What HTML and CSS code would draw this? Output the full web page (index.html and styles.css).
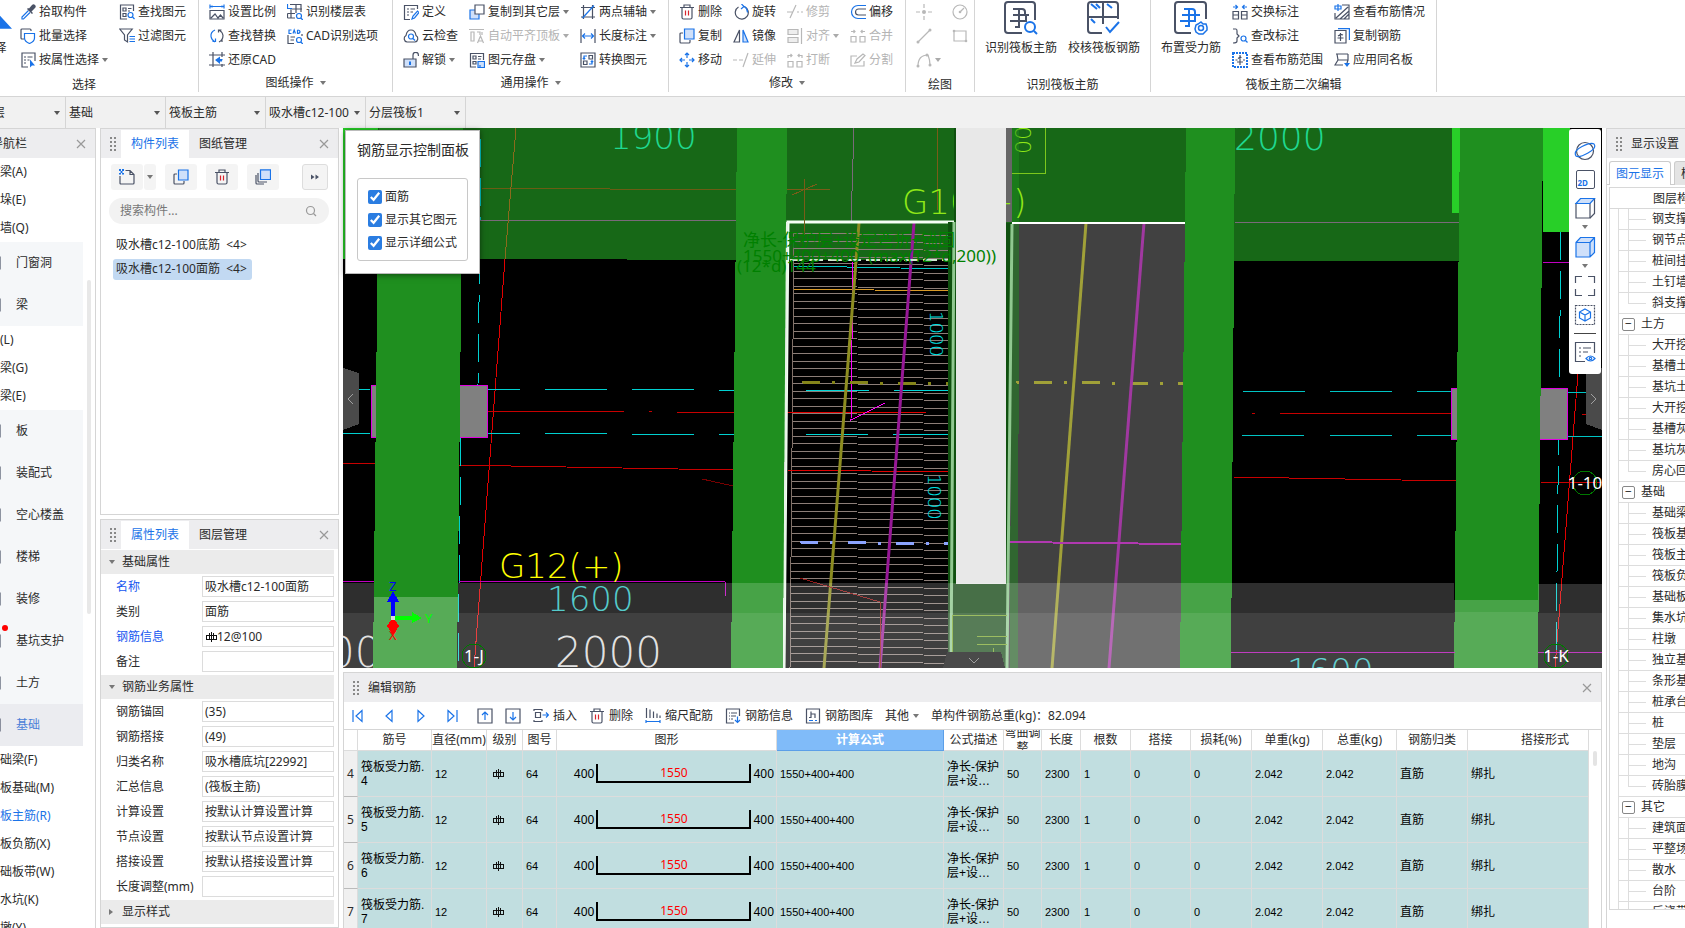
FILE: index.html
```html
<!DOCTYPE html>
<html lang="zh-CN">
<head>
    <meta charset="UTF-8">
    <meta name="viewport" content="width=device-width, initial-scale=1.0">
    <title>筏板主筋 - 编辑钢筋</title>
    <link rel="stylesheet" href="styles.css">
</head>
<body>
    <!-- icon set -->
    <svg class="defs" width="0" height="0">
        <symbol id="pick" viewBox="0 0 16 16"><path class="b" d="M8.500 6.500L2 13v2h1.500L10 8.500"/><path class="ink" d="M7 5l5 5 1-1-1.500-1.500L15 4a1.800 1.800 0 0 0-3-3L9 4.500 8 4z"/></symbol>
        <symbol id="batch" viewBox="0 0 16 16"><path d="M4 11H2a1 1 0 0 1-1-1V2a1 1 0 0 1 1-1h8a1 1 0 0 1 1 1v1"/><path class="b" d="M4.500 5.500h10V10q0 3.500-5 5.500-5-2-5-5.500z"/></symbol>
        <symbol id="byprop" viewBox="0 0 16 16"><path d="M8 15H2V1h13v8M4 5h2M7.500 5h5M4 8h2M7.500 8h2M4 11h2"/><path class="fb" d="M10 7.500v8l2-2h3z"/></symbol>
        <symbol id="find" viewBox="0 0 16 16"><path d="M8 15H1.500V1h13v6M4 4h3v3H4zM4 9.500h3v3H4zM9 4.500h3.500M9 7h2"/><circle class="b" cx="11.500" cy="11" r="2.500"/><path class="b" d="M13.500 13l2 2"/></symbol>
        <symbol id="filter" viewBox="0 0 16 16"><path d="M.800 1h12.400L8.500 7v7L5.500 12V7z"/><path class="b" d="M10.500 8.500H16M10.500 11H16M10.500 13.500H16"/></symbol>
        <symbol id="scale" viewBox="0 0 16 16"><path class="b" d="M1 2.500h14M1 .500v4M15 .500v4M3 1.500v2M13 1.500v2"/><path d="M1 6.500h14V15H1zM2 14l4-4 3 4 2.500-3L14 14"/></symbol>
        <symbol id="swap" viewBox="0 0 16 16"><path class="b" d="M6 2Q1.500 4 2 8.500 2.500 12 6 14M3.500 13.500H6.500V10.500"/><path d="M10 14q4-2 4-6.500Q13.500 4 10 2M13 14v-2.500M9.500 4.500V2h3"/></symbol>
        <symbol id="crop" viewBox="0 0 16 16"><path d="M4 0v15M0 3h16M0 13h16M13 0v5M13 12v3"/><path class="fb" d="M6 8l5-3.500V7h3q-1 0-1 2.500H11V12z"/></symbol>
        <symbol id="floors" viewBox="0 0 16 16"><path d="M3 .500h11V8M9 .500V9M3 5h12M.500 9.500H8M4 6v8M.500 14H8M.500 9.500V14"/><path class="b" d="M.500 0v4.500H5"/><circle class="b" cx="12" cy="12" r="2.500"/><path class="b" d="M13.800 14l2 2"/></symbol>
        <symbol id="cad" viewBox="0 0 16 16"><path d="M7 15.500H1V7M15 6v2M3.500 9H8M3.500 12H7"/><path class="b" d="M4.500 2H2v3.500h2.500M6 5.500l1.200-3.500 1.200 3.500M10.500 2v3.500q2.500 0 2.500-1.700T10.500 2"/><circle class="b" cx="12" cy="12" r="2.500"/><path class="b" d="M13.800 14l2 2"/></symbol>
        <symbol id="define" viewBox="0 0 16 16"><path d="M7 15.500H1.500v-14h13V5M4 5h2M7.500 5H12M4 8h2M7.500 8H10M4 11h2"/><path class="b" d="M9 15l1-3 4.500-5 1.500 1.500L11.500 14z"/></symbol>
        <symbol id="cloud" viewBox="0 0 16 16"><path d="M4 14a3.500 3.500 0 0 1-1-6.500Q4 2 8 2t5 5.500A3.500 3.500 0 0 1 12 14z"/><circle class="b" cx="8" cy="8.500" r="2.500"/><path class="b" d="M10 10.500l2 2"/></symbol>
        <symbol id="unlock" viewBox="0 0 16 16"><path class="tint" d="M1 7h12v8H1z"/><path d="M10 7V3a2.700 2.700 0 0 1 5.400 0v1"/><path class="b bold" d="M7 9.500v3.500"/></symbol>
        <symbol id="copyto" viewBox="0 0 16 16"><path class="b tintb" d="M1 6h9v9H1z"/><path class="solid" d="M6 1h9v9H6z"/></symbol>
        <symbol id="aligntop" viewBox="0 0 16 16"><path d="M0 1.500h15M2 4h3v9H2zM8 4h3v3M13 4v3M8.500 15l3-7 3 7M9.500 13h4"/></symbol>
        <symbol id="store" viewBox="0 0 16 16"><path d="M7 15H1.500V1.500h13V8M4 4h3v3H4zM9 4.500h3.500M9 7h3M4 9.500h3v2.500H4z"/><path class="b tintb" d="M9 9.500h6.500v6H9zM11 13v2.500"/></symbol>
        <symbol id="twopt" viewBox="0 0 16 16"><path d="M3.500 1v14M12.500 1v14M1 3.500h14M1 13h14"/><path class="b" d="M2.500 14L14 1.500"/></symbol>
        <symbol id="length" viewBox="0 0 16 16"><path d="M1 1v14M15 1v14"/><path class="b" d="M2.500 8h11M5 5.500L2.500 8 5 10.500M11 5.500L13.500 8 11 10.500"/></symbol>
        <symbol id="convert" viewBox="0 0 16 16"><path d="M1 1h14v14H1zM9 3.500h3.500V7H9zM3.500 9H7v3.500H3.500z"/><path class="b" d="M7 4H4v3M2.800 6L4 7.200 5.200 6M9 12h3V9M10.800 10L12 8.800l1.200 1.200"/></symbol>
        <symbol id="trash" viewBox="0 0 16 16"><path d="M1 3.500h14M5 3.500V1h6v2.500M3 3.500v10Q3 15 4.500 15h7q1.500 0 1.500-1.500v-10"/><path class="red" d="M6.500 6.500v5M9.500 6.500v5"/></symbol>
        <symbol id="copy" viewBox="0 0 16 16"><path d="M4 5H2a1 1 0 0 0-1 1v8a1 1 0 0 0 1 1h8a1 1 0 0 0 1-1v-2"/><path class="b tintb" d="M5.500 1h9.500v10H5.500z"/></symbol>
        <symbol id="move" viewBox="0 0 16 16"><path class="b" d="M8 1v5M8 10v5M1 8h5M10 8h5M6 3l2-2 2 2M6 13l2 2 2-2M3 6L1 8l2 2M13 6l2 2-2 2"/></symbol>
        <symbol id="rotate" viewBox="0 0 16 16"><path d="M5.500 3a6.500 6.500 0 1 0 6-.3"/><path class="b" d="M8.500 0L11 2.500 8 5M11.500 2.500q3 2 3 6"/></symbol>
        <symbol id="mirror" viewBox="0 0 16 16"><path d="M6.500 2v12H1z"/><path class="b tintb" d="M10 2v12h5z"/></symbol>
        <symbol id="extend" viewBox="0 0 16 16"><path d="M0 8h4M6 8h4M10 15L15 1"/></symbol>
        <symbol id="trim" viewBox="0 0 16 16"><path d="M0 8h6M3 14L9 1M10 8h2M14 8h2"/></symbol>
        <symbol id="align" viewBox="0 0 16 16"><path class="grey" d="M1 1.500h10v5H1zM1 9.500h10v5H1z"/><path d="M14.500 0v16"/></symbol>
        <symbol id="break" viewBox="0 0 16 16"><path d="M1 9.500h5V15H1zM10 9.500h5V15h-5zM1 6V3.500h4M3.500 2L5 3.500 3.500 5M15 6V3.500h-4M12.500 2L11 3.500 12.500 5"/></symbol>
        <symbol id="offset" viewBox="0 0 16 16"><path class="b" d="M16 1.500H8a6.500 6.500 0 0 0 0 13h8"/><path d="M16 5H8.500a3 3 0 0 0 0 6H16"/></symbol>
        <symbol id="merge" viewBox="0 0 16 16"><path d="M1 8.500h5V14H1zM10 8.500h5V14h-5zM1 3.500h4M3.500 2L5 3.500 3.500 5M15 3.500h-4M12.500 2L11 3.500 12.500 5"/></symbol>
        <symbol id="split" viewBox="0 0 16 16"><path d="M7 4H1v10h13V9M5 11l2-4 6-5 2 1.500L9 10z"/></symbol>
        <symbol id="point" viewBox="0 0 16 16"><path d="M8 0v4M8 12v4M0 8h4M12 8h4"/><circle class="dot" cx="8" cy="8" r="2"/></symbol>
        <symbol id="circle" viewBox="0 0 16 16"><circle cx="8" cy="8" r="7"/><path d="M8 8l4-4"/><circle class="dot" cx="8" cy="8" r="1.300"/></symbol>
        <symbol id="line" viewBox="0 0 16 16"><path d="M2 14L14 2"/><circle class="dot" cx="2" cy="14" r="1.500"/><circle class="dot" cx="14" cy="2" r="1.500"/></symbol>
        <symbol id="rect" viewBox="0 0 16 16"><path d="M2 3h12v10H2z"/><circle class="dot" cx="2" cy="3" r="1.300"/><circle class="dot" cx="14" cy="13" r="1.300"/></symbol>
        <symbol id="arc" viewBox="0 0 16 16"><path d="M2 14Q2 3 12 3M12 3q2 5 2 10"/><circle class="dot" cx="2" cy="14" r="1.500"/><circle class="dot" cx="11" cy="3" r="1.500"/><circle class="dot" cx="14" cy="13" r="1.500"/></symbol>
        <symbol id="swaptag" viewBox="0 0 16 16"><path d="M1 7.500h5.500V15H1zM9.500 7.500H15V15H9.500zM1 11h5.500M9.500 11H15"/><path class="b" d="M1 3h4M3.500 1L5.500 3 3.500 5M15 3h-4M12.500 1l-2 2 2 2"/></symbol>
        <symbol id="edittag" viewBox="0 0 16 16"><path d="M1 1h3q1 0 1 2v3l2 2-2 2v3q0 2-4 2"/><circle class="b" cx="11.500" cy="10.500" r="2.500"/><path class="b" d="M13.500 12.500l2 2"/></symbol>
        <symbol id="range" viewBox="0 0 16 16"><path class="b bold dash" d="M1 1h14v14H1z"/><path d="M8 3v10M5 10h6M6 6.500q2-1.500 3.500-1M3.500 8h2M11 8h2"/></symbol>
        <symbol id="state" viewBox="0 0 16 16"><path d="M8 1h7v14H1V9M2 14L14 3M6 15l9-8M10 15l5-5"/><path class="b" d="M4 0v7M1 2h6v3H1z"/></symbol>
        <symbol id="copybar" viewBox="0 0 16 16"><path d="M1 2.500h11V15H1zM6.500 5v8M3.500 10h6M4 8q3-2 5-1"/><path class="b" d="M4 .600h11.400V12"/></symbol>
        <symbol id="apply" viewBox="0 0 16 16"><path d="M2 2h12M3 2l1 6h10V2M4 8l-3 5h8M14 8l-1 3"/><path class="fb" d="M10 11h6l-3 4z"/></symbol>
        <symbol id="bigfind" viewBox="0 0 34 34"><path d="M18 32H4a3 3 0 0 1-3-3V4a3 3 0 0 1 3-3h24a3 3 0 0 1 3 3v15M9 8h9q3 0 3 3v3M9 14h16M6 20h16V15M15 9v17h-4"/><circle class="b" cx="26" cy="26" r="5"/><path class="b" d="M30 30l3 3"/></symbol>
        <symbol id="bigcheck" viewBox="0 0 34 34"><path d="M15 32H4a3 3 0 0 1-3-3V4a3 3 0 0 1 3-3h24a3 3 0 0 1 3 3v14M1 16h30M16 1v22"/><path class="b" d="M4 3l6 5M9 3l4 4M20 3l5 4M4 18l4 4M19 26l4 5 9-10"/></symbol>
        <symbol id="bigplace" viewBox="0 0 34 34"><path d="M17 32H4a3 3 0 0 1-3-3V4a3 3 0 0 1 3-3h25a3 3 0 0 1 3 3v14"/><path class="b" d="M10 8h8q3 0 3 3v3M8 14h18M6 20h15V15M15 9v16h-4"/><circle class="b thin" cx="27" cy="27" r="2.500"/><path class="b thin" d="M27 21l2 2h3l1 3v3l-2 2-2 2h-4l-3-2-1-3 1-4 2-1z"/></symbol>
        <symbol id="arrow" viewBox="0 0 16 16"><path class="fb" d="M4 0l12 13H9l-5 3z"/></symbol>
        <symbol id="new" viewBox="0 0 16 16"><path d="M6.500 1.500H11L15 5.500V14q0 1-1 1H2q-1 0-1-1V7M11 1.500v4h4"/><path class="fb" d="M0 0h2v2H0zM3 0h2v2H3zM1.500 2h2v2h-2zM0 4h2v1.500H0zM3 4h2v1.500H3z"/></symbol>
        <symbol id="layers" viewBox="0 0 16 16"><path d="M3 4v8q0 1 1 1h8M1 6v8q0 1 1 1h7"/><path class="b tintb" d="M5.500.800h10V10.500h-10z"/></symbol>
        <symbol id="more" viewBox="0 0 16 16"><path class="ink" d="M4 5.500l3.500 2.500L4 10.500zM8.500 5.500L12 8l-3.500 2.500z"/></symbol>
        <symbol id="search" viewBox="0 0 16 16"><circle cx="7.500" cy="7.500" r="4"/><path d="M10.500 10.500L13 13"/></symbol>
        <symbol id="close" viewBox="0 0 16 16"><path class="x" d="M4 4l8 8M12 4l-8 8"/></symbol>
        <symbol id="grip" viewBox="0 0 8 16"><path class="grip" d="M1 1h2v2H1zM5 1h2v2H5zM1 5h2v2H1zM5 5h2v2H5zM1 9h2v2H1zM5 9h2v2H5zM1 13h2v2H1zM5 13h2v2H5z"/></symbol>
        <symbol id="first" viewBox="0 0 16 16"><path class="b" d="M4 2v12M13 2.500L7 8l6 5.500z"/></symbol>
        <symbol id="prev" viewBox="0 0 16 16"><path class="b" d="M11 2.500L5 8l6 5.500z"/></symbol>
        <symbol id="next" viewBox="0 0 16 16"><path class="b" d="M5 2.500L11 8l-6 5.500z"/></symbol>
        <symbol id="last" viewBox="0 0 16 16"><path class="b" d="M3 2.500L9 8l-6 5.500zM12 2v12"/></symbol>
        <symbol id="up" viewBox="0 0 16 16"><path d="M1 1h14v14H1z"/><path class="b" d="M8 12V4M5 7l3-3 3 3"/></symbol>
        <symbol id="down" viewBox="0 0 16 16"><path d="M1 1h14v14H1z"/><path class="b" d="M8 4v8M5 9l3 3 3-3"/></symbol>
        <symbol id="insert" viewBox="0 0 16 16"><path d="M9 3V1.500H1V3M1 12v1.500h8V12M2.500 4.500h5v5h-5z"/><path class="b" d="M9.500 7h6M13 4.500L15.500 7 13 9.500"/></symbol>
        <symbol id="ruler" viewBox="0 0 16 16"><path d="M1.500 0v10M5 1.500V10M8.500 3.500V10M12 5.500V10M15 7.500V10"/><path class="b" d="M1 13.500h14M1 12v3M15 12v3"/></symbol>
        <symbol id="info" viewBox="0 0 16 16"><path d="M9 15H1.500V1h13v7M4 5h1M6 5h6M4 8h1M6 8h5M4 11h1M6 11h2"/><path class="b" d="M12.500 8.500v6M10 12l2.500 2.500L15 12"/></symbol>
        <symbol id="lib" viewBox="0 0 16 16"><path d="M1.500 1h13v14h-13zM6 3.500v6H4M6 6h4v4"/><path class="b" d="M4 12.500h4M10 12.500h2"/></symbol>
        <symbol id="rebar" viewBox="0 0 12 12"><path class="blk" d="M6 1v10M1 4h10v4H1zM4 2v7M8 2v7"/></symbol>
        <symbol id="orbit" viewBox="0 0 22 22"><circle cx="11" cy="11" r="8.500"/><path class="b" d="M2 16Q-1 11 8 6.500T20 4q3 4-6 9T2 16z"/></symbol>
        <symbol id="box" viewBox="0 0 22 22"><path d="M2 6.500h14V21H2z"/><path d="M16 21l4.500-4.500V2"/><path class="b tintb" d="M2 6.500L6.500 1.500h14L16 6.500z"/></symbol>
        <symbol id="boxfill" viewBox="0 0 22 22"><path class="b tintb" d="M2 6.500L6.500 1.500h14V16.500L16 21H2zM2 6.500h14V21M16 6.500l4.500-5"/></symbol>
        <symbol id="fit" viewBox="0 0 22 22"><path d="M8 1.500H1.500V8M14 1.500h6.500V8M8 20.500H1.500V14M14 20.500h6.500V14"/></symbol>
        <symbol id="iso" viewBox="0 0 22 22"><path class="dash" d="M1.500 1.500h19v19h-19z"/><path class="b" d="M11 5l5.500 3v6L11 17l-5.500-3V8zM5.500 8l5.500 3 5.500-3M11 11v6"/></symbol>
        <symbol id="show" viewBox="0 0 22 22"><path d="M11 20.500H1.500v-19h19V12M5 7h2M9 7h8M5 11h2M9 11h5M5 15h2"/><path class="b" d="M12 17.500q4.500-5 9 0-4.500 5-9 0z"/><circle class="b" cx="16.500" cy="17.500" r="1.200"/></symbol>
        <symbol id="navicon" viewBox="0 0 16 16"><path class="grey" d="M1 2h14v12H1z"/></symbol>
    </svg>

    <div class="app">
        <header class="ribbon">
            <section class="group group-select">
                <div class="tools">
                    <button class="big"><svg class="ico"><use href="#arrow"/></svg>选择</button>
                    <div class="stack">
                        <button><svg class="ico"><use href="#pick"/></svg>拾取构件</button>
                        <button><svg class="ico"><use href="#batch"/></svg>批量选择</button>
                        <button><svg class="ico"><use href="#byprop"/></svg>按属性选择<i class="caret"></i></button>
                    </div>
                    <div class="stack">
                        <button><svg class="ico"><use href="#find"/></svg>查找图元</button>
                        <button><svg class="ico"><use href="#filter"/></svg>过滤图元</button>
                    </div>
                </div>
                <h2 class="plain">选择</h2>
            </section>
            <section class="group group-sheet">
                <div class="tools">
                    <div class="stack">
                        <button><svg class="ico"><use href="#scale"/></svg>设置比例</button>
                        <button><svg class="ico"><use href="#swap"/></svg>查找替换</button>
                        <button><svg class="ico"><use href="#crop"/></svg>还原CAD</button>
                    </div>
                    <div class="stack">
                        <button><svg class="ico"><use href="#floors"/></svg>识别楼层表</button>
                        <button><svg class="ico"><use href="#cad"/></svg>CAD识别选项</button>
                    </div>
                </div>
                <h2>图纸操作<i class="caret"></i></h2>
            </section>
            <section class="group group-common">
                <div class="tools">
                    <div class="stack">
                        <button><svg class="ico"><use href="#define"/></svg>定义</button>
                        <button><svg class="ico"><use href="#cloud"/></svg>云检查</button>
                        <button><svg class="ico"><use href="#unlock"/></svg>解锁<i class="caret"></i></button>
                    </div>
                    <div class="stack">
                        <button><svg class="ico"><use href="#copyto"/></svg>复制到其它层<i class="caret"></i></button>
                        <button class="off" disabled><svg class="ico"><use href="#aligntop"/></svg>自动平齐顶板<i class="caret"></i></button>
                        <button><svg class="ico"><use href="#store"/></svg>图元存盘<i class="caret"></i></button>
                    </div>
                    <div class="stack">
                        <button><svg class="ico"><use href="#twopt"/></svg>两点辅轴<i class="caret"></i></button>
                        <button><svg class="ico"><use href="#length"/></svg>长度标注<i class="caret"></i></button>
                        <button><svg class="ico"><use href="#convert"/></svg>转换图元</button>
                    </div>
                </div>
                <h2>通用操作<i class="caret"></i></h2>
            </section>
            <section class="group group-modify">
                <div class="tools">
                    <div class="stack">
                        <button><svg class="ico"><use href="#trash"/></svg>删除</button>
                        <button><svg class="ico"><use href="#copy"/></svg>复制</button>
                        <button><svg class="ico"><use href="#move"/></svg>移动</button>
                    </div>
                    <div class="stack">
                        <button><svg class="ico"><use href="#rotate"/></svg>旋转</button>
                        <button><svg class="ico"><use href="#mirror"/></svg>镜像</button>
                        <button class="off" disabled><svg class="ico"><use href="#extend"/></svg>延伸</button>
                    </div>
                    <div class="stack">
                        <button class="off" disabled><svg class="ico"><use href="#trim"/></svg>修剪</button>
                        <button class="off" disabled><svg class="ico"><use href="#align"/></svg>对齐<i class="caret"></i></button>
                        <button class="off" disabled><svg class="ico"><use href="#break"/></svg>打断</button>
                    </div>
                    <div class="stack">
                        <button><svg class="ico"><use href="#offset"/></svg>偏移</button>
                        <button class="off" disabled><svg class="ico"><use href="#merge"/></svg>合并</button>
                        <button class="off" disabled><svg class="ico"><use href="#split"/></svg>分割</button>
                    </div>
                </div>
                <h2>修改<i class="caret"></i></h2>
            </section>
            <section class="group group-draw">
                <div class="tools">
                    <div class="stack">
                        <button class="off" aria-label="点" disabled><svg class="ico"><use href="#point"/></svg></button>
                        <button class="off" aria-label="直线" disabled><svg class="ico"><use href="#line"/></svg></button>
                        <button class="off" aria-label="弧" disabled><svg class="ico"><use href="#arc"/></svg><i class="caret"></i></button>
                    </div>
                    <div class="stack">
                        <button class="off" aria-label="圆" disabled><svg class="ico"><use href="#circle"/></svg></button>
                        <button class="off" aria-label="矩形" disabled><svg class="ico"><use href="#rect"/></svg></button>
                    </div>
                </div>
                <h2 class="plain">绘图</h2>
            </section>
            <section class="group group-detect">
                <div class="tools">
                    <button class="big"><svg class="ico"><use href="#bigfind"/></svg>识别筏板主筋</button>
                    <button class="big"><svg class="ico"><use href="#bigcheck"/></svg>校核筏板钢筋</button>
                </div>
                <h2 class="plain">识别筏板主筋</h2>
            </section>
            <section class="group group-edit">
                <div class="tools">
                    <button class="big"><svg class="ico"><use href="#bigplace"/></svg>布置受力筋</button>
                    <div class="stack">
                        <button><svg class="ico"><use href="#swaptag"/></svg>交换标注</button>
                        <button><svg class="ico"><use href="#edittag"/></svg>查改标注</button>
                        <button><svg class="ico"><use href="#range"/></svg>查看布筋范围</button>
                    </div>
                    <div class="stack">
                        <button><svg class="ico"><use href="#state"/></svg>查看布筋情况</button>
                        <button><svg class="ico"><use href="#copybar"/></svg>复制钢筋</button>
                        <button><svg class="ico"><use href="#apply"/></svg>应用同名板</button>
                    </div>
                </div>
                <h2 class="plain">筏板主筋二次编辑</h2>
            </section>
        </header>

        <div class="combos">
            <label class="combo"><select aria-label="楼层"><option>基础层</option></select></label>
            <label class="combo"><select aria-label="构件大类"><option>基础</option></select></label>
            <label class="combo"><select aria-label="构件类型"><option>筏板主筋</option></select></label>
            <label class="combo"><select aria-label="构件"><option>吸水槽c12-100面筋</option></select></label>
            <label class="combo"><select aria-label="分层"><option>分层筏板1</option></select></label>
        </div>

        <main class="workspace">
            <nav class="panel nav">
                <div class="panel-head nav-head"><span>导航栏</span><button class="close" aria-label="关闭"><svg class="ico"><use href="#close"/></svg></button></div>
                <div class="nav-body">
                    <ul>
                        <li><a href="#">暗梁(A)</a></li>
                        <li><a href="#">墙垛(E)</a></li>
                        <li><a href="#">幕墙(Q)</a></li>
                        <li class="cat"><a href="#"><svg class="ico"><use href="#navicon"/></svg>门窗洞</a></li>
                        <li class="cat"><a href="#"><svg class="ico"><use href="#navicon"/></svg>梁</a></li>
                        <li><a href="#">梁(L)</a></li>
                        <li><a href="#">连梁(G)</a></li>
                        <li><a href="#">圈梁(E)</a></li>
                        <li class="cat"><a href="#"><svg class="ico"><use href="#navicon"/></svg>板</a></li>
                        <li class="cat"><a href="#"><svg class="ico"><use href="#navicon"/></svg>装配式</a></li>
                        <li class="cat"><a href="#"><svg class="ico"><use href="#navicon"/></svg>空心楼盖</a></li>
                        <li class="cat"><a href="#"><svg class="ico"><use href="#navicon"/></svg>楼梯</a></li>
                        <li class="cat"><a href="#"><svg class="ico"><use href="#navicon"/></svg>装修</a></li>
                        <li class="cat"><a href="#" class="has-badge"><svg class="ico"><use href="#navicon"/></svg>基坑支护</a></li>
                        <li class="cat"><a href="#"><svg class="ico"><use href="#navicon"/></svg>土方</a></li>
                        <li class="cat open"><a href="#"><svg class="ico"><use href="#navicon"/></svg>基础</a></li>
                        <li><a href="#">基础梁(F)</a></li>
                        <li><a href="#">筏板基础(M)</a></li>
                        <li class="current"><a href="#">筏板主筋(R)</a></li>
                        <li><a href="#">筏板负筋(X)</a></li>
                        <li><a href="#">基础板带(W)</a></li>
                        <li><a href="#">集水坑(K)</a></li>
                        <li><a href="#">柱墩(Y)</a></li>
                    </ul>
                    <div class="nav-thumb"></div>
                </div>
            </nav>

            <div class="side">
                <section class="panel parts">
                    <div class="panel-head">
                        <svg class="grip-ico"><use href="#grip"/></svg>
                        <button class="tab active">构件列表</button>
                        <button class="tab">图纸管理</button>
                        <button class="close" aria-label="关闭"><svg class="ico"><use href="#close"/></svg></button>
                    </div>
                    <div class="part-tools">
                        <div class="split-btn">
                            <button class="tool" aria-label="新建"><svg class="ico"><use href="#new"/></svg></button>
                            <button class="tool slim" aria-label="新建选项"><i class="caret"></i></button>
                        </div>
                        <button class="tool" aria-label="复制"><svg class="ico"><use href="#copy"/></svg></button>
                        <button class="tool" aria-label="删除"><svg class="ico"><use href="#trash"/></svg></button>
                        <button class="tool" aria-label="层间复制"><svg class="ico"><use href="#layers"/></svg></button>
                        <button class="tool more" aria-label="更多"><svg class="ico"><use href="#more"/></svg></button>
                    </div>
                    <label class="search">
                        <input type="text" aria-label="搜索构件" placeholder="搜索构件...">
                        <svg class="ico"><use href="#search"/></svg>
                    </label>
                    <ul class="part-list">
                        <li>吸水槽c12-100底筋&nbsp; &lt;4&gt;</li>
                        <li class="selected">吸水槽c12-100面筋&nbsp; &lt;4&gt;</li>
                    </ul>
                </section>

                <section class="panel props">
                    <div class="panel-head">
                        <svg class="grip-ico"><use href="#grip"/></svg>
                        <button class="tab active">属性列表</button>
                        <button class="tab">图层管理</button>
                        <button class="close" aria-label="关闭"><svg class="ico"><use href="#close"/></svg></button>
                    </div>
                    <h3><i class="caret"></i>基础属性</h3>
                    <div class="prop key"><label for="p-name">名称</label><div class="field"><input id="p-name" type="text" value="吸水槽c12-100面筋"></div></div>
                    <div class="prop"><label for="p-type">类别</label><div class="field"><input id="p-type" type="text" value="面筋"></div></div>
                    <div class="prop key"><label for="p-bar">钢筋信息</label><div class="field"><svg class="rebar"><use href="#rebar"/></svg><input id="p-bar" type="text" value="12@100"></div></div>
                    <div class="prop"><label for="p-note">备注</label><div class="field"><input id="p-note" type="text"></div></div>
                    <h3><i class="caret"></i>钢筋业务属性</h3>
                    <div class="prop"><label for="p-anchor">钢筋锚固</label><div class="field"><input id="p-anchor" type="text" value="(35)"></div></div>
                    <div class="prop"><label for="p-lap">钢筋搭接</label><div class="field"><input id="p-lap" type="text" value="(49)"></div></div>
                    <div class="prop"><label for="p-class">归类名称</label><div class="field"><input id="p-class" type="text" value="吸水槽底坑[22992]"></div></div>
                    <div class="prop"><label for="p-sum">汇总信息</label><div class="field"><input id="p-sum" type="text" value="(筏板主筋)"></div></div>
                    <div class="prop"><label for="p-calc">计算设置</label><div class="field"><input id="p-calc" type="text" value="按默认计算设置计算"></div></div>
                    <div class="prop"><label for="p-node">节点设置</label><div class="field"><input id="p-node" type="text" value="按默认节点设置计算"></div></div>
                    <div class="prop"><label for="p-joint">搭接设置</label><div class="field"><input id="p-joint" type="text" value="按默认搭接设置计算"></div></div>
                    <div class="prop"><label for="p-len">长度调整(mm)</label><div class="field"><input id="p-len" type="text"></div></div>
                    <h3><i class="caret right"></i>显示样式</h3>
                </section>
            </div>

            <div class="center">
                <section class="view">
                    <svg class="model" viewBox="343 128 1259 540" preserveAspectRatio="xMidYMid slice">
                        <defs>
                            <pattern id="bars" x="790" y="232" width="200" height="15" patternUnits="userSpaceOnUse">
                                <path d="M0 1l200 3M0 9l200 3" stroke="#8c7e78"/>
                            </pattern>
                        </defs>
                        <rect x="343" y="128" width="1259" height="540" fill="#000"/>
                        <!-- beams across the top -->
                        <path d="M343 128h1116v133L343 259z" fill="#176817"/>
                        <path d="M343 128h35v131h-35zM1452 128h8v85h-8zM1543 128h27v104h-27z" fill="#28cf28"/>
                        <g fill="none">
                            <path d="M480 188l257 2" stroke="#6b5c14"/>
                            <path d="M480 220l257 1M1235 222h224" stroke="#7a6a7a"/>
                            <path d="M516 128l-11 131" stroke="#8a6a1c"/>
                            <path d="M505 259l-31 409M1578 373l-23 295" stroke="#e00000"/>
                            <path d="M343 463l391 7M1233 477l224 4M1541 482h61" stroke="#c80000"/>
                            <path d="M487 411h137M649 411h3M677 412h57M1252 413h3M1280 413h171M1582 414h10" stroke="#c80000"/>
                            <path d="M702 479l31 7" stroke="#780000"/>
                            <path d="M343 389h27M487 389h33M545 389h62M632 389h62M719 390h15M343 433h27M487 433h33M545 433h62M632 434h62M719 434h15" stroke="#00d0d0"/>
                            <path d="M1243 391h62M1330 391h62M1417 391h34M1567 392h35M1242 435h62M1330 435h62M1417 435h34M1567 436h35" stroke="#00c4c4"/>
                            <path d="M481 139l-3 246M461 438l-3 227M1561 232l-5 425" stroke="#00d0d0" stroke-dasharray="28 11"/>
                            <path d="M343 581h31M459 581l266 1v14M1543 262h27" stroke="#c000c0"/>
                        </g>
                        <g class="cadtext">
                            <text x="610" y="149" font-size="34" fill="#1fd890">1900</text>
                            <text x="1234" y="150" font-size="36" fill="#1fd890">2000</text>
                            <text x="499" y="578" font-size="34" fill="#ffff00">G12(+)</text>
                            <text x="547" y="611" font-size="34" fill="#30c0c0">1600</text>
                            <text x="555" y="667" font-size="42" fill="#d8d8d8">2000</text>
                            <text x="328" y="667" font-size="42" fill="#d8d8d8">00</text>
                            <text x="1287" y="683" font-size="34" fill="#30c0c0">1600</text>
                        </g>
                        <!-- column stubs -->
                        <path d="M371 385h10v52h-10zM455 385h32v52h-32zM1451 388h10v51h-10zM1537 388h30v51h-30z" fill="#808080" stroke="#e000e0"/>
                        <!-- slab with bars -->
                        <path d="M788 224h166v444H783z" fill="#000"/>
                        <path d="M788 224h166v36H788z" fill="#176817"/>
                        <path d="M794 232h160v436H790z" fill="url(#bars)"/>
                        <path d="M793 266l161 3" stroke="#00c8c8"/>
                        <path d="M793 289l161 2" stroke="#d89a28"/>
                        <path d="M794 232L790 668" stroke="#807068" fill="none"/>
                        <path d="M787 412h139M787 470l168 2" stroke="#e00000"/>
                        <path d="M806 390h63M894 390h60M806 434h62M893 434h61" stroke="#00d8d8"/>
                        <path d="M854 128L851 223" stroke="#7a6a7a"/>
                        <path d="M853 262L851 420l34-17" stroke="#ff00ff" fill="none"/>
                        <path d="M802 382l152 2" stroke="#85851a" stroke-width="3" stroke-dasharray="18 12 3 15"/>
                        <path d="M800 542l152 2" stroke="#8ca4ff" stroke-width="3" stroke-dasharray="18 12 3 15"/>
                        <path class="smooth" d="M859 223L824 668" stroke="#8c8c20" stroke-width="3"/>
                        <path class="smooth" d="M914 223L880 668" stroke="#961896" stroke-width="3"/>
                        <path d="M800 578l80 24v66" stroke="#901818" fill="none"/>
                        <path class="smooth" d="M784 668L788 222h166" stroke="#f4fff4" stroke-width="3" fill="none"/>
                        <path d="M790 260h164" stroke="#d0e8d0" stroke-width="2" stroke-dasharray="14 5"/>
                        <g class="cadtext">
                            <text transform="translate(930 311) rotate(90)" font-size="18" fill="#00e0e0">1000</text>
                            <text transform="translate(928 474) rotate(90)" font-size="18" fill="#00e0e0">1000</text>
                            <text transform="translate(1015 112) rotate(90)" font-size="22" fill="#90e818">000</text>
                        </g>
                        <!-- pale slab on the right -->
                        <path d="M1012 224h174l-5 444H1006z" fill="#414141"/>
                        <path d="M1012 128h7v94l-1 446h-8z" fill="#1f8c1f" opacity=".5"/>
                        <path d="M1006 128h6v94h-6z" fill="#666"/>
                        <path d="M1016 382l168 2" stroke="#a0a038" stroke-width="3" stroke-dasharray="3 15 18 12"/>
                        <path class="smooth" d="M1086 223L1052 668" stroke="#a0a038" stroke-width="3"/>
                        <path class="smooth" d="M1144 223L1109 668" stroke="#a038a0" stroke-width="3"/>
                        <path d="M1008 550v-8l173 2" stroke="#b038b0" stroke-width="2" fill="none"/>
                        <path d="M1012 223h174" stroke="#fff" stroke-width="2"/>
                        <path d="M1045 128v45h-33" stroke="#7cc81c" fill="none"/>
                        <path d="M804 179v56M787 189h43M792 195l25-11M937 128v82" stroke="#7a5c18" fill="none"/>
                        <text class="cadtext" x="902" y="214" font-size="34" fill="#90e818">G10(+)</text>
                        <!-- shaft wall -->
                        <path d="M954 128h4v540h-10V222h6z" fill="#0f500f"/>
                        <path d="M1006 223h5l-4 445h-5z" fill="#0f500f"/>
                        <path d="M948 584h59v84h-59z" fill="#1f501f"/>
                        <path class="smooth" d="M954 222l-3 446M1012 224l-5 444" stroke="#90c890" stroke-width="3"/>
                        <path d="M952 668v-53h55M977 636h30M977 644h30M993 668v-20" stroke="#7ca82c" fill="none"/>
                        <path d="M956 128h50v456h-50z" fill="#e8e8e8"/>
                        <!-- columns -->
                        <path d="M379 128h84l-6 540h-84zM737 128h50l-4 540h-52zM1186 128h49l-4 540h-51zM1460 128h83l-5 540h-84z" fill="#1f8f1f"/>
                        <path class="smooth" d="M787 222L784 668" stroke="#e8f4e8" stroke-width="2"/>
                        <!-- ground haze -->
                        <path d="M343 583h31v14h84v-14h996v17h84v-16h64v84H343z" fill="#fff" opacity=".18"/>
                        <path d="M343 613h31v-16h84v16h996v-1h84v1h64v55H343z" fill="#fff" opacity=".09"/>
                        <path d="M1231 652h224M1538 652h64" stroke="#c03cc0"/>
                        <!-- axis marks -->
                        <g fill="none" stroke="#007800">
                            <circle cx="474" cy="656" r="12"/><circle cx="1556" cy="656" r="12"/><circle cx="1585" cy="483" r="12"/>
                        </g>
                        <g class="axis" fill="#fff">
                            <text x="474" y="662">1-J</text><text x="1556" y="662">1-K</text><text x="1585" y="489">1-10</text>
                        </g>
                        <g class="formula" fill="#008000">
                            <text x="743" y="246">净长-保护层+设定弯折+锚固</text>
                            <text x="743" y="262">1550+400+400</text>
                            <text x="737" y="272">(12*d)144</text>
                            <text x="996" y="262" text-anchor="end">(max(12*d,200))</text>
                        </g>
                        <!-- ucs tripod -->
                        <path d="M391 616v-14h-4l6-11 6 11h-4v14z" fill="#0000ff"/>
                        <path d="M395 616h17v-4l10 6-10 5v-3h-17z" fill="#00ff00"/>
                        <path d="M391 620h4l4 6-6 9-6-9z" fill="#ff0000"/>
                        <path d="M391 616h4v4h-4z" fill="#ddd"/>
                        <g class="ucs"><text x="389" y="591" fill="#0000ff">Z</text><text x="425" y="623" fill="#00ff00">Y</text><text x="389" y="640" fill="#ff0000">X</text></g>
                        <!-- fold handles -->
                        <path d="M343 368l16 5v51l-16 6zM1602 368l-16 5v51l16 6zM943 668l4-16h54l4 16z" fill="#4a4a4a"/>
                        <path class="smooth" d="M353 394l-5 5 5 5M1591 394l5 5-5 5M969 658l5 5 5-5" fill="none" stroke="#a0a0a0"/>
                    </svg>
                    <div class="float-panel">
                        <h4>钢筋显示控制面板</h4>
                        <fieldset>
                            <label><input type="checkbox" checked>面筋</label>
                            <label><input type="checkbox" checked>显示其它图元</label>
                            <label><input type="checkbox" checked>显示详细公式</label>
                        </fieldset>
                    </div>
                    <div class="view-tools">
                        <button aria-label="动态观察"><svg class="ico"><use href="#orbit"/></svg></button>
                        <button class="twod"><span>2D</span></button>
                        <button aria-label="视图"><svg class="ico"><use href="#box"/></svg><i class="caret"></i></button>
                        <button aria-label="实体"><svg class="ico"><use href="#boxfill"/></svg><i class="caret"></i></button>
                        <button aria-label="全屏"><svg class="ico"><use href="#fit"/></svg></button>
                        <button aria-label="局部三维"><svg class="ico"><use href="#iso"/></svg></button>
                        <hr>
                        <button aria-label="显示设置"><svg class="ico"><use href="#show"/></svg></button>
                    </div>
                </section>

                <section class="panel bars">
                    <div class="panel-head">
                        <svg class="grip-ico"><use href="#grip"/></svg>
                        <span class="title">编辑钢筋</span>
                        <button class="close" aria-label="关闭"><svg class="ico"><use href="#close"/></svg></button>
                    </div>
                    <div class="bar-tools">
                        <div class="pager">
                            <button aria-label="首行"><svg class="ico"><use href="#first"/></svg></button>
                            <button aria-label="上一行"><svg class="ico"><use href="#prev"/></svg></button>
                            <button aria-label="下一行"><svg class="ico"><use href="#next"/></svg></button>
                            <button aria-label="末行"><svg class="ico"><use href="#last"/></svg></button>
                        </div>
                        <button aria-label="上移"><svg class="ico"><use href="#up"/></svg></button>
                        <button aria-label="下移"><svg class="ico"><use href="#down"/></svg></button>
                        <button><svg class="ico"><use href="#insert"/></svg>插入</button>
                        <button><svg class="ico"><use href="#trash"/></svg>删除</button>
                        <button><svg class="ico"><use href="#ruler"/></svg>缩尺配筋</button>
                        <button><svg class="ico"><use href="#info"/></svg>钢筋信息</button>
                        <button><svg class="ico"><use href="#lib"/></svg>钢筋图库</button>
                        <button>其他<i class="caret"></i></button>
                        <span>单构件钢筋总重(kg)：82.094</span>
                    </div>
                    <div class="table-wrap">
                        <table>
                            <colgroup>
                                <col class="c-no"><col class="c-name"><col class="c-dia"><col class="c-lvl"><col class="c-fig"><col class="c-shape"><col class="c-calc"><col class="c-desc"><col class="c-bend"><col class="c-len"><col class="c-num"><col class="c-lap"><col class="c-loss"><col class="c-unit"><col class="c-total"><col class="c-unit"><col>
                            </colgroup>
                            <thead>
                                <tr><th></th><th>筋号</th><th>直径(mm)</th><th>级别</th><th>图号</th><th>图形</th><th class="on">计算公式</th><th>公式描述</th><th class="wrap"><div>弯曲调整</div></th><th>长度</th><th>根数</th><th>搭接</th><th>损耗(%)</th><th>单重(kg)</th><th>总重(kg)</th><th>钢筋归类</th><th class="last">搭接形式</th></tr>
                            </thead>
                            <tbody>
                                <tr><th>4</th><td class="txt">筏板受力筋.4</td><td>12</td><td><svg class="rebar"><use href="#rebar"/></svg></td><td>64</td><td class="shape"><div><span>400</span><b>1550</b><span>400</span></div></td><td>1550+400+400</td><td class="txt">净长-保护层+设…</td><td>50</td><td>2300</td><td>1</td><td>0</td><td>0</td><td>2.042</td><td>2.042</td><td class="txt">直筋</td><td class="txt">绑扎</td></tr>
                                <tr><th>5</th><td class="txt">筏板受力筋.5</td><td>12</td><td><svg class="rebar"><use href="#rebar"/></svg></td><td>64</td><td class="shape"><div><span>400</span><b>1550</b><span>400</span></div></td><td>1550+400+400</td><td class="txt">净长-保护层+设…</td><td>50</td><td>2300</td><td>1</td><td>0</td><td>0</td><td>2.042</td><td>2.042</td><td class="txt">直筋</td><td class="txt">绑扎</td></tr>
                                <tr><th>6</th><td class="txt">筏板受力筋.6</td><td>12</td><td><svg class="rebar"><use href="#rebar"/></svg></td><td>64</td><td class="shape"><div><span>400</span><b>1550</b><span>400</span></div></td><td>1550+400+400</td><td class="txt">净长-保护层+设…</td><td>50</td><td>2300</td><td>1</td><td>0</td><td>0</td><td>2.042</td><td>2.042</td><td class="txt">直筋</td><td class="txt">绑扎</td></tr>
                                <tr><th>7</th><td class="txt">筏板受力筋.7</td><td>12</td><td><svg class="rebar"><use href="#rebar"/></svg></td><td>64</td><td class="shape"><div><span>400</span><b>1550</b><span>400</span></div></td><td>1550+400+400</td><td class="txt">净长-保护层+设…</td><td>50</td><td>2300</td><td>1</td><td>0</td><td>0</td><td>2.042</td><td>2.042</td><td class="txt">直筋</td><td class="txt">绑扎</td></tr>
                            </tbody>
                        </table>
                        <div class="table-thumb"></div>
                    </div>
                </section>
            </div>

            <aside class="panel display">
                <div class="panel-head"><svg class="grip-ico"><use href="#grip"/></svg><span class="title">显示设置</span></div>
                <div class="display-tabs"><button class="active">图元显示</button><button>楼层显示</button></div>
                <div class="tree">
                    <h5>图层构件</h5>
                    <ul>
                        <li>钢支撑</li>
                        <li>钢节点</li>
                        <li>桩间挂网</li>
                        <li>土钉墙</li>
                        <li class="end">斜支撑</li>
                        <li class="node"><button>−</button>土方</li>
                        <li>大开挖土方</li>
                        <li>基槽土方</li>
                        <li>基坑土方</li>
                        <li>大开挖灰土</li>
                        <li>基槽灰土</li>
                        <li>基坑灰土</li>
                        <li class="end">房心回填</li>
                        <li class="node"><button>−</button>基础</li>
                        <li>基础梁</li>
                        <li>筏板基础</li>
                        <li>筏板主筋</li>
                        <li>筏板负筋</li>
                        <li>基础板带</li>
                        <li>集水坑</li>
                        <li>柱墩</li>
                        <li>独立基础</li>
                        <li>条形基础</li>
                        <li>桩承台</li>
                        <li>桩</li>
                        <li>垫层</li>
                        <li>地沟</li>
                        <li class="end">砖胎膜</li>
                        <li class="node"><button>−</button>其它</li>
                        <li>建筑面积</li>
                        <li>平整场地</li>
                        <li>散水</li>
                        <li>台阶</li>
                        <li>后浇带</li>
                    </ul>
                </div>
            </aside>
        </main>
    </div>
</body>
</html>
```

FILE: styles.css
```css
* {
    box-sizing: border-box;
}
body {
    margin: 0;
    overflow: hidden;
    background-color: #fff;
    color: #2b2b2b;
    font-family: "Noto Sans", "Noto Sans CJK SC", sans-serif;
    font-size: 12px;
    line-height: 16px;
    --ink: #4a5266;
    --blue: #1a73e8;
    --tint: #cfe0fa;
    --red: #d8242c;
}
button, input, select {
    font: inherit;
    color: inherit;
    background: none;
    border: none;
    padding: 0;
    margin: 0;
}
button {
    white-space: nowrap;
}
ul {
    list-style: none;
    margin: 0;
    padding: 0;
}
a {
    color: inherit;
    text-decoration: none;
}
h2, h3, h4, h5 {
    margin: 0;
    font-size: 12px;
    font-weight: normal;
}

/* icons */
.defs {
    position: absolute;
}
.ico {
    display: block;
    flex: none;
    width: 16px;
    height: 16px;
    fill: none;
    stroke: var(--ink);
    stroke-width: 1.2;
}
.b { stroke: var(--blue); }
.fb { fill: var(--blue); stroke: none; }
.ink { fill: var(--ink); stroke: none; }
.tint { fill: var(--tint); }
.tintb { fill: var(--tint); }
.solid { fill: #fff; }
.grey { fill: #eee; }
.red { stroke: var(--red); }
.bold { stroke-width: 2; }
.thin { stroke-width: 1.5; }
.dash { stroke-dasharray: 2 1; }
.dot { fill: var(--ink); stroke: none; }
.x { stroke: #999; }
.grip { fill: #888; }
.blk { fill: none; stroke: #111; stroke-width: 1; shape-rendering: crispEdges; }
.grip-ico {
    flex: none;
    width: 8px;
    height: 16px;
}
.rebar {
    display: block;
    flex: none;
    width: 12px;
    height: 12px;
}
.caret {
    display: inline-block;
    flex: none;
    border: 3px solid transparent;
    border-top: 4px solid #777;
    border-bottom: 0;
}
.caret.right {
    margin-right: 2px;
    border: 3px solid transparent;
    border-left: 4px solid #777;
    border-right: 0;
}

/* the window is dragged partly past the left screen edge */
.app {
    display: flex;
    flex-direction: column;
    height: 100vh;
    margin-left: -34px;
}

/* ribbon */
.ribbon {
    display: flex;
    flex: none;
    height: 97px;
    border-bottom: 1px solid #d5d5d5;
}
.group {
    flex: none;
    height: 92px;
    padding-left: 10px;
    border-right: 1px solid #d5d5d5;
}
.group-select { width: 233px; padding-left: 0; }
.group-sheet { width: 194px; }
.group-common { width: 276px; }
.group-modify { width: 237px; }
.group-draw { width: 69px; }
.group-detect { width: 176px; }
.group-edit { width: 286px; }
.tools {
    display: flex;
    gap: 11px;
    height: 72px;
}
.stack button {
    display: flex;
    align-items: center;
    gap: 3px;
    height: 24px;
}
.big {
    display: flex;
    flex-direction: column;
    align-items: center;
    gap: 5px;
    padding-top: 1px;
}
.big .ico {
    width: 34px;
    height: 34px;
    stroke-width: 2;
}
.group-select .big {
    width: 43px;
    padding-left: 14px;
}
.off {
    color: #b4b4b4;
    --ink: #b8b8b8;
    --blue: #b8b8b8;
}
.off .caret {
    border-top-color: #aaa;
}
.group h2 {
    display: flex;
    align-items: center;
    justify-content: center;
    gap: 6px;
    height: 21px;
    margin-left: -10px;
}
.group .plain {
    height: 25px;
}
.group-select h2 {
    margin-left: 4px;
}

/* floor / part selectors */
.combos {
    display: flex;
    flex: none;
    height: 31px;
    background-color: #f1f1f1;
}
.combo {
    display: flex;
    align-items: center;
    gap: 5px;
    width: 100px;
    padding: 0 5px 0 3px;
    border-right: 1px solid #d5d5d5;
}
.combo select {
    flex: 1;
    min-width: 0;
    appearance: none;
}
.combo::after {
    content: "";
    border: 3px solid transparent;
    border-top: 4px solid #555;
    border-bottom: 0;
}

/* panels */
.workspace {
    flex: 1;
    min-height: 0;
    display: grid;
    grid-template-columns: 130px 239px minmax(0, 1fr) 79px;
    grid-template-rows: minmax(0, 1fr);
    gap: 4px;
}
.panel {
    overflow: hidden;
    border: 1px solid #d5d5d5;
    background-color: #fff;
}
.panel-head {
    display: flex;
    align-items: center;
    flex: none;
    height: 29px;
    padding-left: 8px;
    background-color: #ededef;
}
.close {
    margin-left: auto;
    padding: 0 6px;
}
.tab {
    height: 28px;
    padding: 0 10px;
    align-self: flex-end;
}
.grip-ico + .tab {
    margin-left: 4px;
}
.tab.active {
    color: var(--blue);
    background-color: #fff;
}
.title {
    margin-left: 8px;
    white-space: nowrap;
}

/* navigation */
.nav {
    border-bottom: none;
    border-left: none;
}
.nav-head {
    padding-left: 25px;
}
.nav-body {
    display: flex;
    gap: 4px;
}
.nav-body ul {
    width: 117px;
}
.nav-body a {
    display: flex;
    align-items: center;
    height: 28px;
    padding-left: 22px;
}
.nav-body .cat a {
    position: relative;
    gap: 15px;
    height: 42px;
    padding-left: 19px;
    background-color: #f5f7f9;
}
.nav-body .open a {
    color: #4a7fd8;
    background-color: #ebecf0;
}
.nav-body .current a {
    color: var(--blue);
}
.has-badge::after {
    content: "";
    position: absolute;
    left: 36px;
    top: 5px;
    width: 6px;
    height: 6px;
    border-radius: 50%;
    background-color: #f00;
}
.nav-thumb {
    width: 4px;
    height: 334px;
    margin-top: 122px;
    border-radius: 2px;
    background-color: #e8e8e8;
}

/* component list + properties */
.side {
    display: flex;
    flex-direction: column;
    gap: 4px;
    min-height: 0;
}
.parts {
    flex: 1;
    min-height: 0;
}
.part-tools {
    display: flex;
    gap: 9px;
    padding: 6px 10px 8px;
}
.split-btn {
    display: flex;
    gap: 1px;
}
.tool {
    display: flex;
    align-items: center;
    justify-content: center;
    width: 32px;
    height: 26px;
    border-radius: 3px;
    background-color: #f4f4f4;
}
.tool.slim {
    width: 12px;
}
.tool.more {
    width: 26px;
    margin-left: auto;
    border: 1px solid #ddd;
}
.search {
    display: flex;
    align-items: center;
    height: 26px;
    margin: 0 9px 0 8px;
    padding: 0 10px 0 11px;
    border-radius: 13px;
    background-color: #f2f2f2;
    --ink: #999;
}
.search input {
    flex: 1;
    min-width: 0;
}
.search input::placeholder {
    color: #777;
}
.part-list {
    padding: 11px 12px;
}
.part-list li {
    width: fit-content;
    margin-bottom: 3px;
    padding: 2px 5px 3px 3px;
    border-radius: 3px;
}
.part-list .selected {
    background-color: #c2d9f2;
}
.props {
    flex: 0 0 409px;
    padding-right: 4px;
}
.props .panel-head {
    margin-right: -4px;
}
.props h3 {
    display: flex;
    align-items: center;
    gap: 7px;
    height: 24px;
    margin-top: 1px;
    padding-left: 8px;
    background-color: #ebebeb;
}
.prop {
    display: flex;
    align-items: center;
    height: 25px;
    padding-left: 15px;
}
.prop label {
    width: 86px;
}
.prop.key label {
    color: #1657f0;
}
.field {
    display: flex;
    align-items: center;
    flex: 1;
    min-width: 0;
    height: 21px;
    padding-left: 2px;
    border: 1px solid #dcdcdc;
}
.field input {
    flex: 1;
    min-width: 0;
    line-height: 18px;
}

/* model view */
.center {
    display: flex;
    flex-direction: column;
    gap: 4px;
    min-width: 0;
}
.view {
    position: relative;
    flex: 1;
    min-height: 0;
}
.model {
    display: block;
    width: 100%;
    height: 100%;
    shape-rendering: crispEdges;
}
.smooth {
    shape-rendering: auto;
}
.cadtext {
    font-family: "DejaVu Sans", sans-serif;
    font-weight: 200;
}
.axis {
    font-size: 17px;
    text-anchor: middle;
}
.formula {
    font-size: 17px;
}
.ucs {
    font-size: 13px;
}
.float-panel {
    position: absolute;
    left: 2px;
    top: 2px;
    width: 135px;
    padding: 11px 11px 12px;
    border: 1px solid #bbb;
    background-color: #fff;
    box-shadow: 0 1px 6px rgba(0, 0, 0, 0.5);
}
.float-panel h4 {
    font-size: 14px;
    white-space: nowrap;
}
.float-panel fieldset {
    margin: 20px 0 0;
    padding: 6px 0 6px 10px;
    border: 1px solid #c8c8c8;
    border-radius: 3px;
}
.float-panel label {
    display: flex;
    align-items: center;
    gap: 3px;
    height: 23px;
    white-space: nowrap;
}
.float-panel input {
    width: 14px;
    height: 14px;
    accent-color: #2b7de1;
}
.view-tools {
    position: absolute;
    right: 1px;
    top: 1px;
    display: flex;
    flex-direction: column;
    align-items: center;
    gap: 7px;
    width: 32px;
    padding: 11px 0;
    border-radius: 3px;
    background-color: #fff;
}
.view-tools button {
    display: flex;
    flex-direction: column;
    align-items: center;
    gap: 6px;
}
.view-tools .ico {
    width: 22px;
    height: 22px;
}
.view-tools .twod {
    align-items: flex-start;
    justify-content: flex-end;
    width: 19px;
    height: 19px;
    margin: 1px 0;
    padding-left: 1px;
    border: 1px solid var(--ink);
    border-radius: 2px;
    color: var(--blue);
    font-size: 8px;
    font-weight: bold;
    line-height: 10px;
}
.view-tools hr {
    width: 22px;
    margin: 0;
    border: none;
    border-top: 1px solid #444;
}

/* rebar table */
.bars {
    display: flex;
    flex-direction: column;
    flex: 0 0 256px;
    border-bottom: none;
}
.bar-tools {
    display: flex;
    align-items: center;
    flex: none;
    gap: 12px;
    height: 27px;
    padding-left: 5px;
    white-space: nowrap;
}
.bar-tools button {
    display: flex;
    align-items: center;
    gap: 4px;
}
.pager {
    display: flex;
    gap: 16px;
    margin-right: 4px;
}
.table-wrap {
    display: flex;
    align-items: flex-start;
    flex: none;
    gap: 4px;
    border-top: 1px solid #d5d5d5;
}
table {
    flex: 1;
    min-width: 0;
    table-layout: fixed;
    border-collapse: separate;
    border-spacing: 0;
}
.c-no { width: 14px; }
.c-name { width: 74px; }
.c-dia { width: 55px; }
.c-lvl { width: 36px; }
.c-fig { width: 34px; }
.c-shape { width: 220px; }
.c-calc { width: 167px; }
.c-desc { width: 60px; }
.c-bend { width: 38px; }
.c-len { width: 39px; }
.c-num { width: 50px; }
.c-lap { width: 60px; }
.c-loss { width: 61px; }
.c-unit { width: 71px; }
.c-total { width: 74px; }
th, td {
    padding: 0;
    border-right: 1px solid #dcdcdc;
    border-bottom: 1px solid #dcdcdc;
}
th {
    font-weight: normal;
    white-space: nowrap;
    overflow: hidden;
}
thead th {
    height: 21px;
    padding: 0;
}
thead .on {
    color: #fff;
    font-weight: bold;
    background-color: #80bbf9;
    border-color: #5c9fe8;
}
thead .wrap div {
    display: flex;
    align-items: center;
    height: 20px;
    overflow: hidden;
    white-space: normal;
    line-height: 15px;
}
thead .last {
    padding-left: 34px;
}
tbody th {
    background-color: #f0f0f0;
    border-bottom-color: #bbb;
}
td {
    height: 46px;
    padding: 0 3px;
    background-color: #c1dee0;
    color: #000;
    font-family: "Liberation Sans", sans-serif;
    font-size: 11px;
    line-height: 14px;
}
td.txt {
    padding: 0 2px 0 3px;
    font-family: "Liberation Sans", "Noto Sans CJK SC", sans-serif;
    font-size: 12px;
    word-break: break-all;
}
td .rebar {
    margin: 0 2px;
}
td.shape {
    padding: 0 2px;
}
.shape div {
    display: flex;
    align-items: center;
    justify-content: flex-end;
    gap: 2px;
    font-family: "Noto Sans", sans-serif;
    font-size: 12px;
}
.shape b {
    width: 155px;
    height: 19px;
    border: 2px solid #000;
    border-top: none;
    color: #f00;
    font-weight: normal;
    line-height: 18px;
    text-align: center;
}
.table-thumb {
    width: 4px;
    height: 15px;
    margin: 21px 4px 0 0;
    border-radius: 2px;
    background-color: #e4e4e4;
}

/* display settings */
.display {
    display: flex;
    flex-direction: column;
    border-bottom: none;
    border-right: none;
    padding-bottom: 18px;
}
.display .title {
    margin-left: 8px;
}
.display-tabs {
    display: flex;
    gap: 3px;
    flex: none;
    height: 27px;
    padding: 3px 0 0 2px;
    border-bottom: 1px solid #ccc;
}
.display-tabs button {
    flex: none;
    height: 24px;
    padding: 0 6px;
    border: 1px solid #ccc;
    border-bottom: none;
    border-radius: 3px 3px 0 0;
    background-color: #e4e4e4;
}
.display-tabs .active {
    color: var(--blue);
    background-color: #fff;
}
.tree {
    flex: 1;
    min-height: 0;
    margin: 2px 0 0 2px;
    overflow: hidden;
    border: 1px solid #d8d8d8;
    border-right: none;
    white-space: nowrap;
}
.tree h5 {
    height: 21px;
    padding-left: 43px;
    line-height: 21px;
    border-bottom: 1px solid #d8d8d8;
}
.tree li {
    display: flex;
    align-items: center;
    gap: 6px;
    height: 21px;
    margin-left: 8px;
    padding-left: 9px;
    border-left: 1px solid #ddd;
    border-bottom: 1px solid #ddd;
}
.tree li::before {
    content: "";
    flex: none;
    width: 17px;
    height: 21px;
    border-left: 1px solid #ddd;
    background: linear-gradient(#ddd, #ddd) 0 10px / 17px 1px no-repeat;
}
.tree .end::before {
    height: 11px;
    align-self: flex-start;
}
.tree .node {
    padding-left: 3px;
}
.tree .node::before {
    display: none;
}
.tree .node button {
    width: 13px;
    height: 13px;
    border: 1px solid #888;
    border-radius: 2px;
    line-height: 10px;
}
```
